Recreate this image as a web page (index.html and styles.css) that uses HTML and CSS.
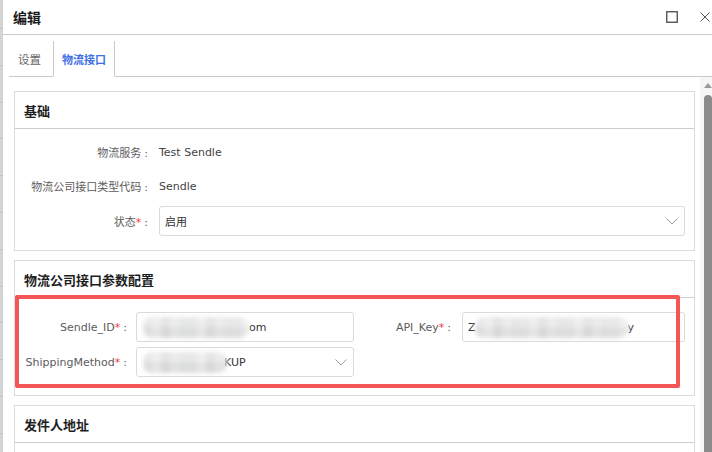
FILE: index.html
```html
<!DOCTYPE html>
<html lang="zh-CN">
<head>
<meta charset="utf-8">
<title>编辑</title>
<link rel="stylesheet" href="styles.css">
</head>
<body>
<div class="strip"></div>
<div class="dialog">
  <div class="dlg-head">
    <span class="dlg-title">编辑</span>
    <span class="dlg-tools">
      <svg class="ico-max" width="12" height="12" viewBox="0 0 12 12"><rect x="0.75" y="0.75" width="10.5" height="10.5" fill="none" stroke="#4a4a4a" stroke-width="1.3"/></svg>
      <svg class="ico-close" width="10" height="10" viewBox="0 0 10 10"><path d="M0.5 0.5 L9.5 9.5 M9.5 0.5 L0.5 9.5" stroke="#555" stroke-width="1" fill="none"/></svg>
    </span>
  </div>
  <div class="tabs">
    <div class="tab">设置</div>
    <div class="tab active">物流接口</div>
  </div>
  <div class="content">
    <div class="pane">
      <section class="card">
        <div class="card-head">基础</div>
        <div class="card-body basic">
          <div class="row">
            <div class="field">
              <span class="lbl lbl-basic">物流服务<span class="colon">:</span></span>
              <span class="val">Test Sendle</span>
            </div>
          </div>
          <div class="row">
            <div class="field">
              <span class="lbl lbl-basic">物流公司接口类型代码<span class="colon">:</span></span>
              <span class="val">Sendle</span>
            </div>
          </div>
          <div class="row row-select">
            <div class="field">
              <span class="lbl lbl-basic">状态<span class="req">*</span><span class="colon">:</span></span>
              <div class="input select">
                <span class="input-text">启用</span>
                <svg class="chev" width="12" height="7" viewBox="0 0 12 7"><polyline points="0.5,0.5 6,6 11.5,0.5" fill="none" stroke="#9a9a9a" stroke-width="1"/></svg>
              </div>
            </div>
          </div>
        </div>
      </section>

      <section class="card card-params">
        <div class="card-head">物流公司接口参数配置</div>
        <div class="card-body params">
          <div class="row">
            <div class="field field-left">
              <span class="lbl lbl-p1">Sendle_ID<span class="req">*</span><span class="colon">:</span></span>
              <div class="input">
                <span class="input-text"><span class="blur blur-id" aria-hidden="true"></span>om</span>
              </div>
            </div>
            <div class="field field-right">
              <span class="lbl lbl-p2">API_Key<span class="req">*</span><span class="colon">:</span></span>
              <div class="input">
                <span class="input-text">Z<span class="blur blur-key" aria-hidden="true"></span>y</span>
              </div>
            </div>
          </div>
          <div class="row row-second">
            <div class="field field-left">
              <span class="lbl lbl-p1">ShippingMethod<span class="req">*</span><span class="colon">:</span></span>
              <div class="input select">
                <span class="input-text"><span class="blur blur-ship" aria-hidden="true"></span>KUP</span>
                <svg class="chev" width="12" height="7" viewBox="0 0 12 7"><polyline points="0.5,0.5 6,6 11.5,0.5" fill="none" stroke="#9a9a9a" stroke-width="1"/></svg>
              </div>
            </div>
          </div>
        </div>
        <div class="highlight"></div>
      </section>

      <section class="card card-last">
        <div class="card-head">发件人地址</div>
        <div class="card-body"></div>
      </section>
    </div>
    <div class="scrollbar">
      <svg class="sb-arrow" width="8" height="5" viewBox="0 0 8 5"><polygon points="4,0 8,5 0,5" fill="#9a9a9a"/></svg>
      <div class="sb-thumb"></div>
    </div>
  </div>
</div>
</body>
</html>
```
FILE: styles.css
```css
* { box-sizing: border-box; }
html, body { margin: 0; padding: 0; }
body {
  width: 712px;
  height: 452px;
  overflow: hidden;
  display: flex;
  background: #fff;
  font-family: "DejaVu Sans", "Noto Sans CJK SC", sans-serif;
  font-size: 11px;
  color: #444;
}
.strip {
  width: 3px;
  flex: none;
  background-color: #d4d4d4;
  background-image: repeating-linear-gradient(180deg, transparent 0, transparent 28px, #c2c2c2 28px, #c2c2c2 29px, transparent 29px, transparent 36.8px);
}
.dialog {
  flex: 1;
  display: flex;
  flex-direction: column;
  min-width: 0;
}
.dlg-head {
  height: 35px;
  flex: none;
  border-bottom: 1px solid #cacaca;
  display: flex;
  align-items: center;
  padding-left: 10px;
  padding-bottom: 1px;
}
.dlg-title {
  font-family: "Noto Sans CJK SC", sans-serif;
  font-size: 14px;
  font-weight: bold;
  color: #1a1a1a;
}
.dlg-tools {
  margin-left: auto;
  display: flex;
  align-items: center;
}
.ico-max { margin-right: 22px; }
.ico-close { margin-right: 2px; }
.tabs {
  height: 42px;
  flex: none;
  margin-left: 6px;
  border-bottom: 1px solid #cacaca;
  display: flex;
  align-items: flex-end;
}
.tab {
  height: 36px;
  margin-bottom: -1px;
  display: flex;
  align-items: center;
  font-family: "Noto Sans CJK SC", sans-serif;
  font-size: 11.5px;
  color: #666;
}
.tab:first-child {
  width: 44px;
  padding-left: 9px;
}
.tab.active {
  width: 62px;
  justify-content: center;
  border-left: 1px solid #cacaca;
  border-right: 1px solid #cacaca;
  border-bottom: 1px solid #fff;
  background: #fff;
  color: #3f6fe6;
  font-size: 11px;
  font-weight: 600;
}
.content {
  flex: 1;
  display: flex;
  min-height: 0;
}
.pane {
  flex: 1;
  overflow: hidden;
  padding: 14px 5px 0 11px;
}
.card {
  border: 1px solid #dcdcdc;
  background: #fff;
  position: relative;
}
.card + .card { margin-top: 9px; }
.card-head {
  height: 37px;
  border-bottom: 1px solid #cdcdcd;
  padding-left: 9px;
  display: flex;
  align-items: center;
  font-family: "Noto Sans CJK SC", sans-serif;
  font-size: 13px;
  font-weight: bold;
  color: #1e1e1e;
}
.card-body {
  padding: 0 9px 0 0;
}
.card-body.basic { padding-top: 8px; padding-bottom: 14px; }
.card-body.params { padding-top: 14px; padding-bottom: 18px; }
.card-last .card-body { height: 80px; }
.row {
  display: flex;
  height: 30px;
}
.row + .row { margin-top: 4px; }
.row.row-select { margin-top: 5px; }
.row.row-second { margin-top: 5px; }
.field {
  display: flex;
  align-items: center;
  height: 30px;
}
.basic .field { width: 100%; }
.field-left { width: 339px; flex: none; }
.field-right { flex: 1; }
.lbl {
  flex: none;
  text-align: right;
  color: #5c5c5c;
  white-space: nowrap;
}
.lbl-basic { width: 133px; margin-right: 11px; }
.lbl-p1 { width: 112px; margin-right: 9px; }
.lbl-p2 { width: 97px; margin-right: 11px; }
.colon { margin-left: 3px; color: #5c5c5c; }
.req { color: #f23a3a; }
.val { color: #444; }
.input {
  flex: 1;
  height: 30px;
  border: 1px solid #dadada;
  border-radius: 3px;
  display: flex;
  align-items: center;
  padding-left: 5px;
  padding-right: 6px;
  background: #fff;
  min-width: 0;
  overflow: hidden;
}
.input-text {
  color: #333;
  white-space: nowrap;
  display: flex;
  align-items: center;
}
.chev { margin-left: auto; flex: none; }
.blur {
  display: inline-block;
  height: 21px;
  border-radius: 9px;
  background-image:
    linear-gradient(180deg, rgba(255,255,255,0.25) 0 50%, rgba(0,0,0,0.02) 50% 100%),
    repeating-linear-gradient(90deg, #e1e1e1 0 9px, #eaeaea 9px 18px, #dcdcdc 18px 27px, #e6e6e6 27px 36px, #dfe1e2 36px 45px);
  filter: blur(2.2px);
}
.blur-id { width: 106px; margin-left: 1px; }
.blur-ship { width: 84px; margin-left: 1px; margin-right: -3px; }
.blur-key { width: 154px; margin-left: -1px; margin-right: -1px; }
.highlight {
  position: absolute;
  left: 0;
  top: 34px;
  width: 665px;
  height: 93px;
  border: 4px solid #f45656;
  border-radius: 2px;
  pointer-events: none;
}
.scrollbar {
  width: 12px;
  flex: none;
  background: #f6f6f6;
  display: flex;
  flex-direction: column;
  padding-top: 6px;
}
.sb-arrow { margin-left: 4px; flex: none; }
.sb-thumb {
  flex: 1;
  margin-top: 7px;
  margin-left: 4px;
  background: #8b8b8b;
  border-radius: 4px 4px 0 0;
}
```
